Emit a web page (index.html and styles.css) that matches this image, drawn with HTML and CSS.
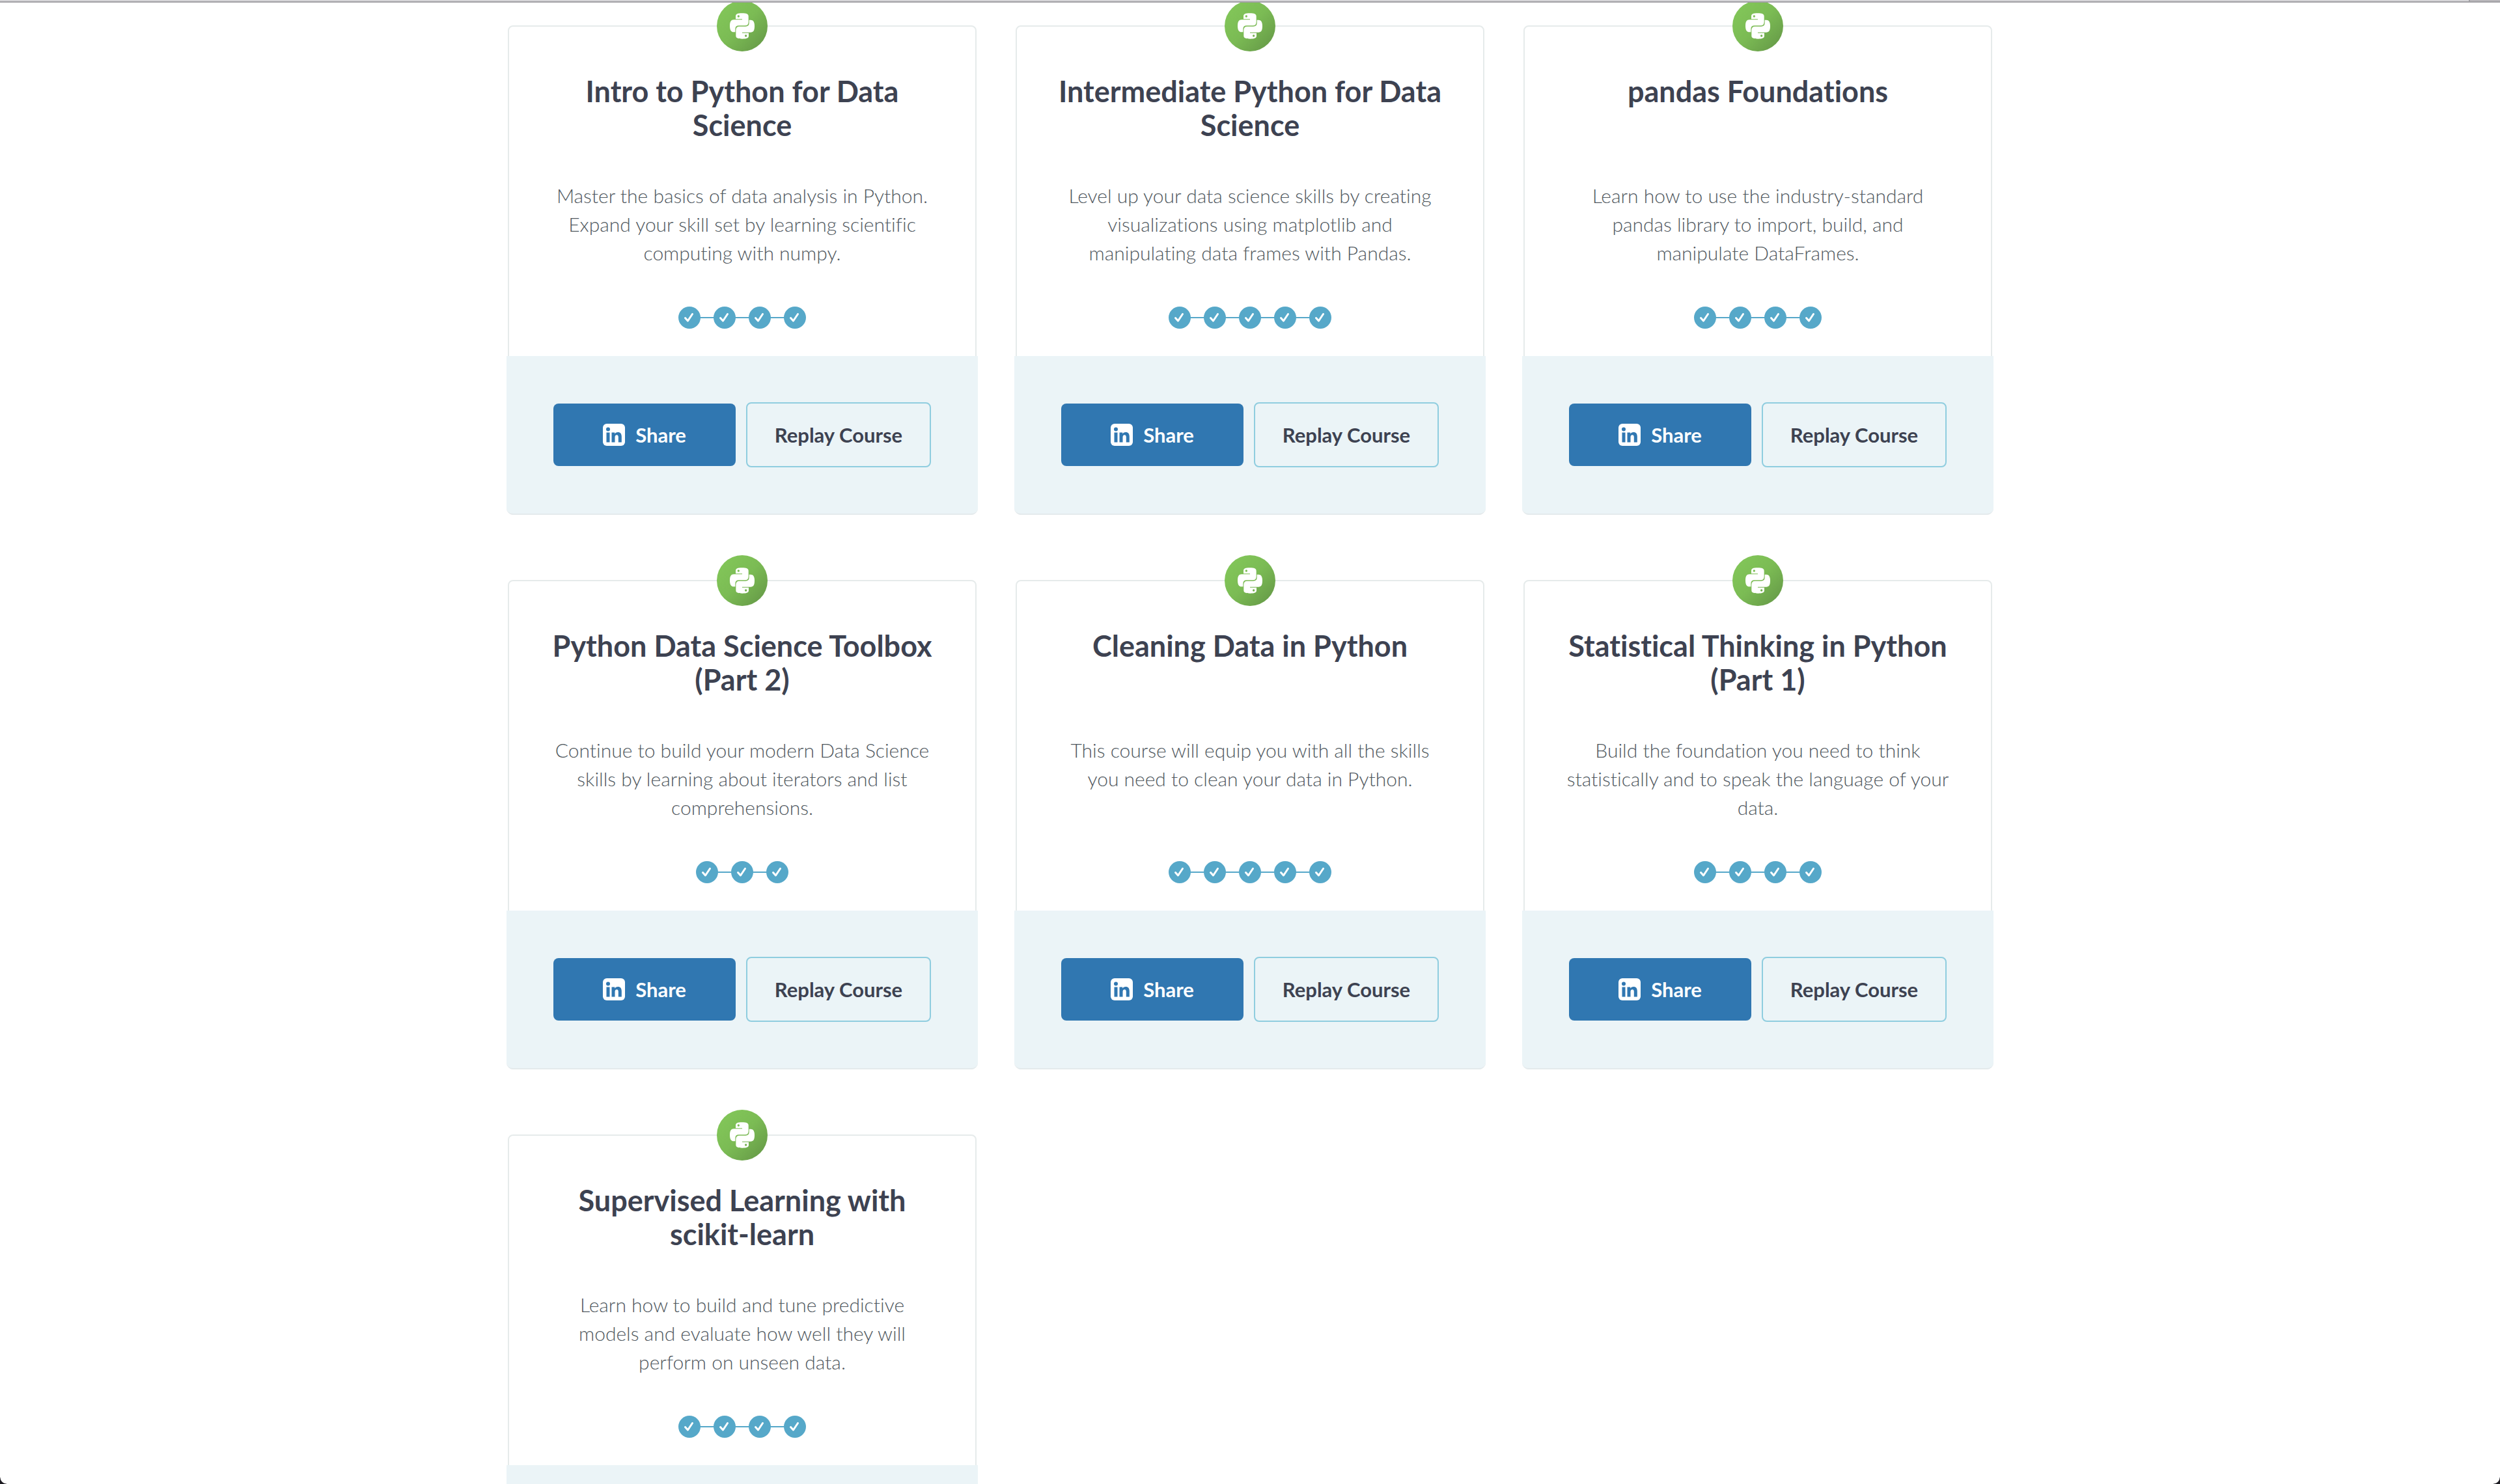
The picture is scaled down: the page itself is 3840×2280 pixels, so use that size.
FILE: index.html
```html
<!DOCTYPE html>
<html lang="en">
<head>
<meta charset="utf-8">
<title>Completed courses</title>
<link rel="stylesheet" href="styles.css">
</head>
<body>
<svg class="sprites" aria-hidden="true">
  <defs>
    <linearGradient id="leaf" x1="0" y1="0" x2="1" y2="1">
      <stop offset="0" stop-color="#84c95a"/>
      <stop offset=".5" stop-color="#7bbb54"/>
      <stop offset=".9" stop-color="#679c48"/>
    </linearGradient>
    <path id="snake" fill-rule="evenodd" d="M87 85V72C87 62 95 58 116 58S146 62 146 72V98Q146 115 130 115H102Q85 115 85 131V145H78C66 145 60 136 60 116S66 88 78 88H117V85ZM100 67a5 5 0 1 0 0 10a5 5 0 1 0 0-10Z"/>
    <symbol id="python" viewBox="0 0 234 234">
      <circle cx="117" cy="117" r="117" fill="url(#leaf)"/>
      <use href="#snake" fill="#fff"/>
      <use href="#snake" fill="#fff" transform="rotate(180 117 117)"/>
    </symbol>
    <symbol id="check" viewBox="0 0 34 34">
      <circle cx="17" cy="17" r="17" fill="#56a8c9"/>
      <path d="M10.500 17.500L14.500 22L21.500 11.500" fill="none" stroke="#fff" stroke-width="3" stroke-linecap="round" stroke-linejoin="round"/>
    </symbol>
    <symbol id="linkedin" viewBox="0 0 34 34">
      <rect width="34" height="34" rx="6" fill="#fff"/>
      <g fill="#3077b1">
        <circle cx="8" cy="8.500" r="3"/>
        <path d="M5.500 13.500h5V28.500h-5zM13.500 13.500h4.700v2c1-1.500 2.600-2.400 4.800-2.400 4 0 5.800 2.500 5.800 6.700v8.700h-5v-8c0-2-.7-3.300-2.400-3.300s-2.900 1.200-2.900 3.300v8h-5z"/>
      </g>
    </symbol>
  </defs>
</svg>
<div class="toolbar-edge"><span class="toolbar-tab"></span><span class="toolbar-end"></span></div>
<main class="courses">
  <article class="card">
    <svg class="badge"><use href="#python"/></svg>
    <div class="body">
      <h2 class="title">Intro to Python for Data Science</h2>
      <p class="text">Master the basics of data analysis in Python. Expand your skill set by learning scientific computing with numpy.</p>
      <div class="steps"><svg class="step"><use href="#check"/></svg><svg class="step"><use href="#check"/></svg><svg class="step"><use href="#check"/></svg><svg class="step"><use href="#check"/></svg></div>
    </div>
    <footer class="actions">
      <button class="button share"><svg class="logo"><use href="#linkedin"/></svg>Share</button>
      <button class="button replay">Replay Course</button>
    </footer>
  </article>
  <article class="card">
    <svg class="badge"><use href="#python"/></svg>
    <div class="body">
      <h2 class="title">Intermediate Python for Data Science</h2>
      <p class="text">Level up your data science skills by creating visualizations using matplotlib and manipulating data frames with Pandas.</p>
      <div class="steps"><svg class="step"><use href="#check"/></svg><svg class="step"><use href="#check"/></svg><svg class="step"><use href="#check"/></svg><svg class="step"><use href="#check"/></svg><svg class="step"><use href="#check"/></svg></div>
    </div>
    <footer class="actions">
      <button class="button share"><svg class="logo"><use href="#linkedin"/></svg>Share</button>
      <button class="button replay">Replay Course</button>
    </footer>
  </article>
  <article class="card">
    <svg class="badge"><use href="#python"/></svg>
    <div class="body">
      <h2 class="title">pandas Foundations</h2>
      <p class="text">Learn how to use the industry-standard pandas library to import, build, and manipulate DataFrames.</p>
      <div class="steps"><svg class="step"><use href="#check"/></svg><svg class="step"><use href="#check"/></svg><svg class="step"><use href="#check"/></svg><svg class="step"><use href="#check"/></svg></div>
    </div>
    <footer class="actions">
      <button class="button share"><svg class="logo"><use href="#linkedin"/></svg>Share</button>
      <button class="button replay">Replay Course</button>
    </footer>
  </article>
  <article class="card">
    <svg class="badge"><use href="#python"/></svg>
    <div class="body">
      <h2 class="title">Python Data Science Toolbox (Part 2)</h2>
      <p class="text">Continue to build your modern Data Science skills by learning about iterators and list comprehensions.</p>
      <div class="steps"><svg class="step"><use href="#check"/></svg><svg class="step"><use href="#check"/></svg><svg class="step"><use href="#check"/></svg></div>
    </div>
    <footer class="actions">
      <button class="button share"><svg class="logo"><use href="#linkedin"/></svg>Share</button>
      <button class="button replay">Replay Course</button>
    </footer>
  </article>
  <article class="card">
    <svg class="badge"><use href="#python"/></svg>
    <div class="body">
      <h2 class="title">Cleaning Data in Python</h2>
      <p class="text">This course will equip you with all the skills you need to clean your data in Python.</p>
      <div class="steps"><svg class="step"><use href="#check"/></svg><svg class="step"><use href="#check"/></svg><svg class="step"><use href="#check"/></svg><svg class="step"><use href="#check"/></svg><svg class="step"><use href="#check"/></svg></div>
    </div>
    <footer class="actions">
      <button class="button share"><svg class="logo"><use href="#linkedin"/></svg>Share</button>
      <button class="button replay">Replay Course</button>
    </footer>
  </article>
  <article class="card">
    <svg class="badge"><use href="#python"/></svg>
    <div class="body">
      <h2 class="title">Statistical Thinking in Python (Part 1)</h2>
      <p class="text">Build the foundation you need to think statistically and to speak the language of your data.</p>
      <div class="steps"><svg class="step"><use href="#check"/></svg><svg class="step"><use href="#check"/></svg><svg class="step"><use href="#check"/></svg><svg class="step"><use href="#check"/></svg></div>
    </div>
    <footer class="actions">
      <button class="button share"><svg class="logo"><use href="#linkedin"/></svg>Share</button>
      <button class="button replay">Replay Course</button>
    </footer>
  </article>
  <article class="card">
    <svg class="badge"><use href="#python"/></svg>
    <div class="body">
      <h2 class="title">Supervised Learning with scikit-learn</h2>
      <p class="text">Learn how to build and tune predictive models and evaluate how well they will perform on unseen data.</p>
      <div class="steps"><svg class="step"><use href="#check"/></svg><svg class="step"><use href="#check"/></svg><svg class="step"><use href="#check"/></svg><svg class="step"><use href="#check"/></svg></div>
    </div>
    <footer class="actions actions-cut"></footer>
  </article>
</main>
<span class="corner corner-left"></span>
<span class="corner corner-right"></span>
</body>
</html>
```
FILE: styles.css
```css
* { box-sizing: border-box; }

body {
  margin: 0;
  background: #fff;
  font-family: Lato, "Liberation Sans", sans-serif;
  font-variant-ligatures: none;
}

.sprites { position: absolute; width: 0; height: 0; }

/* lower edge of the browser toolbar */
.toolbar-edge {
  position: fixed;
  top: 0;
  left: 0;
  right: 0;
  z-index: 2;
  display: flex;
  gap: 2px;
  height: 4px;
  background: #a1a0a4;
  border-bottom: 2px solid #a1a0a4;
}
.toolbar-tab { flex: 1; background: #d6d5d8; }
.toolbar-end { width: 46px; background: #b9b7bb; }

.courses {
  display: grid;
  grid-template-columns: repeat(auto-fill, minmax(720px, 1fr));
  align-items: start;
  gap: 100px 60px;
  max-width: 2280px;
  margin: 0 auto;
  padding-top: 39px;
}

.card {
  position: relative;
  border: 2px solid #e6ebeb;
  border-radius: 8px;
}

.badge {
  position: absolute;
  top: -40px;
  left: 50%;
  width: 78px;
  height: 78px;
  transform: translateX(-50%);
}

.body { padding: 73px 58px 42px; text-align: center; }

.title {
  min-height: 104px;
  margin: 0 0 60px;
  font-size: 45px;
  line-height: 52px;
  font-weight: 700;
  color: #3d4251;
}

.text {
  min-height: 132px;
  margin: 0 0 61px;
  padding: 0 4px;
  font-size: 30px;
  line-height: 44px;
  font-weight: 300;
  color: #50585e;
}

.steps {
  display: flex;
  justify-content: center;
  gap: 20px;
  width: fit-content;
  margin: 0 auto;
  background: linear-gradient(#56a8c9, #56a8c9) center / 90% 2px no-repeat;
}
.step { width: 34px; height: 34px; }

.actions {
  display: flex;
  align-items: center;
  justify-content: center;
  gap: 16px;
  margin: 0 -4px -2px;
  padding: 71px 0;
  background: #ebf4f7;
  border-bottom: 2px solid #e4eaec;
  border-radius: 0 0 10px 10px;
}
.actions-cut {
  height: 29px;
  padding: 0;
  border: 0;
  border-radius: 0;
}

.button {
  display: flex;
  align-items: center;
  justify-content: center;
  gap: 16px;
  padding: 0;
  border: 0;
  border-radius: 8px;
  font-family: inherit;
  font-size: 31px;
  line-height: 36px;
  font-weight: 700;
}
.share { width: 280px; height: 96px; background: #3077b1; color: #fff; }
.replay {
  width: 284px;
  height: 100px;
  background: transparent;
  border: 2px solid #8fcddf;
  color: #3d4251;
}
.logo { width: 34px; height: 34px; }

/* rounded bottom corners of the window */
.corner { position: fixed; bottom: 0; width: 10px; height: 10px; }
.corner-left { left: 0; background: radial-gradient(circle at 100% 0, transparent 9px, #1b1a20 10px); }
.corner-right { right: 0; background: radial-gradient(circle at 0 0, transparent 9px, #1b1a20 10px); }
```
